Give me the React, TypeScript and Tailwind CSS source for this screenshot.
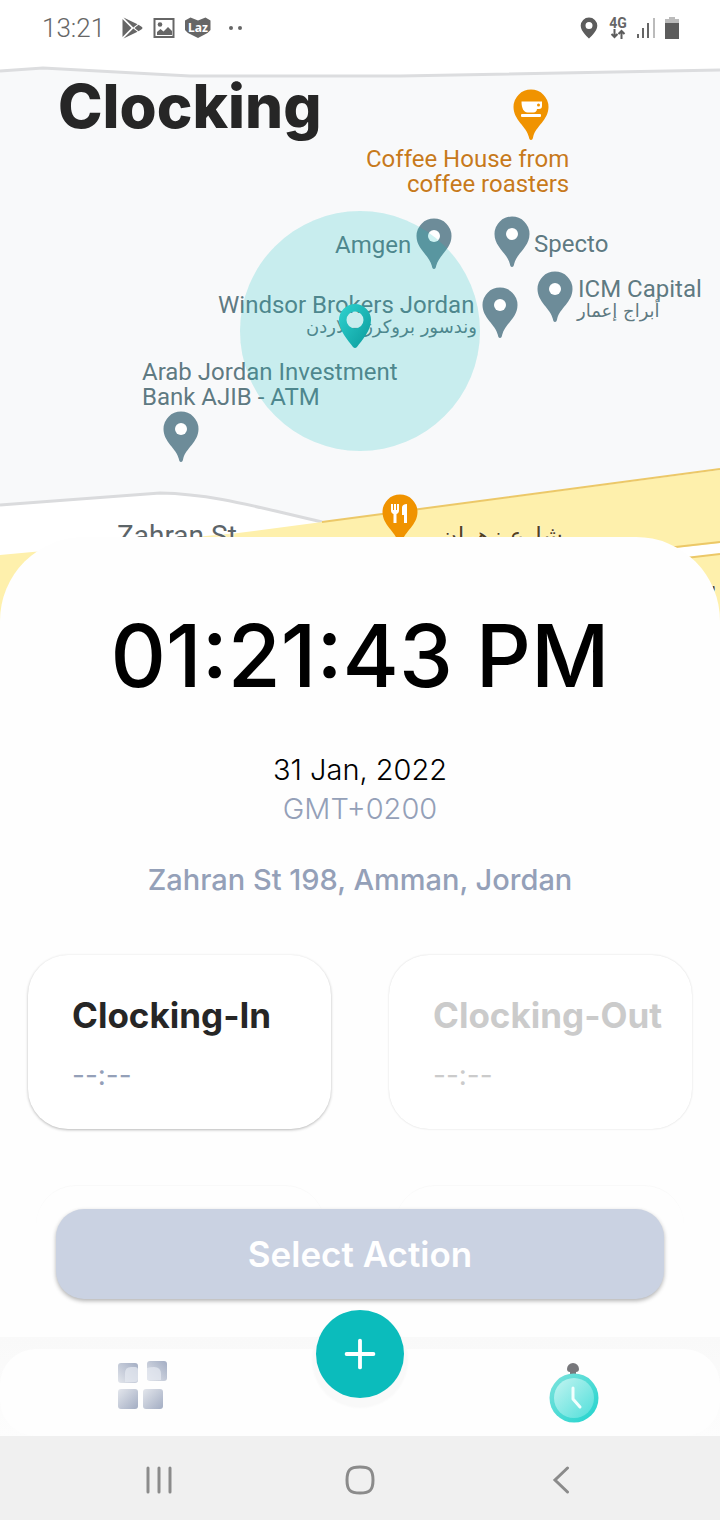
import type { ReactNode } from 'react';
import { Plus } from 'lucide-react';

// size of the drawn map tile, marker coordinates are relative to it
const MAP_WIDTH = 720;

const GREY = '#6d8c99';
const ORANGE = '#f09300';

const pins = [
    { name: 'coffee', x: 513, y: 89, color: ORANGE },
    { name: 'amgen', x: 416, y: 218, color: GREY },
    { name: 'specto', x: 494, y: 216, color: GREY },
    { name: 'icm', x: 537, y: 271, color: GREY },
    { name: 'windsor', x: 482, y: 287, color: GREY },
    { name: 'atm', x: 163, y: 411, color: GREY },
    { name: 'food', x: 382, y: 494, color: ORANGE },
];

const labels = [
    { lines: ['Coffee House from', 'coffee roasters'], x: 366, y: 147, style: 'text-2xl text-right text-[#c77a1c]' },
    { lines: ['Amgen'], x: 335, y: 233, style: 'text-2xl text-[#5f7a82]' },
    { lines: ['Specto'], x: 534, y: 232, style: 'text-2xl text-[#5f7a82]' },
    { lines: ['ICM Capital'], x: 578, y: 277, style: 'text-2xl text-[#5f7a82]' },
    { lines: ['Windsor Brokers Jordan'], x: 218, y: 293, style: 'text-2xl text-[#5f7a82]' },
    { lines: ['Arab Jordan Investment', 'Bank AJIB - ATM'], x: 142, y: 360, style: 'text-2xl text-[#5f7a82]' },
    { lines: ['Zahran St'], x: 117, y: 523, style: 'text-[28px] text-[#5c6468]' },
];

const arabicLabels = [
    { text: 'أبراج إعمار', x: 577, y: 299, style: 'text-lg text-[#5f7a82]' },
    { text: 'وندسور بروكرز - لاردن', x: 306, y: 315, style: 'text-lg text-[#5f7a82]' },
    { text: 'شارع زهران', x: 440, y: 524, style: 'text-2xl text-[#54421f]' },
    { text: 'ر', x: 707, y: 573, style: 'text-lg text-[#54421f]' },
];

function PinGlyph({ name }: { name: string }) {
    if (name === 'coffee') {
        return (
            <g fill="#fff">
                <path d="M8.5 12.5h20.500v4.500a3 3 0 0 1-3 3h-2a4 4 0 0 1-3.500 3.500h-6c-3.500 0-6-4-6-11z" />
                <rect x="8" y="25" width="20" height="3" rx="1" />
                <circle cx="25.500" cy="16" r="1.500" fill={ORANGE} />
            </g>
        );
    }
    if (name === 'food') {
        return (
            <g fill="#fff">
                <path d="M9 10h2v6h1v-6h2v6h1v-6h2v6.500c0 2-1 3-2.500 3.500v9h-3v-9C10 19.500 9 18.500 9 16.500z" />
                <path d="M20 13.500c0-2 2-3.500 5-3.500v19h-3v-8h-2z" />
            </g>
        );
    }
    return <circle cx="18" cy="18" r="6" fill="#fff" />;
}

function MapPin({ name, color }: { name: string; color: string }) {
    return (
        <svg width="36" height="52" viewBox="0 0 36 52">
            <path
                d="M18 51c-1.300 0-1.700-1-2.200-3.200C13.500 37.500.5 31 .5 18a17.500 17.500 0 0 1 35 0c0 13-13 19.500-15.300 29.800C19.700 50 19.300 51 18 51z"
                fill={color}
            />
            <PinGlyph name={name} />
        </svg>
    );
}

function StatusBar() {
    return (
        <div className="relative flex items-center justify-between h-14 pl-[42px] pr-10 text-[#666]">
            <div className="flex items-center">
                <span className="w-[78px] font-[Roboto,sans-serif] text-[26px] font-light">13:21</span>
                <svg width="24" height="22" viewBox="0 0 24 22" fill="#666">
                    <path d="M2.500 2v18l9-9z" />
                    <path d="M3.500.5l14 6.800-4.200 3.200zM3.500 21.500l14-6.800-4.200-3.200zM14.500 11l4-3.200 3.500 2.200q1 1 0 2l-3.500 2.200z" />
                </svg>
                <svg className="ml-2" width="24" height="22" viewBox="0 0 24 22" fill="none">
                    <rect x="2.500" y="2" width="19" height="18" stroke="#666" strokeWidth="2" />
                    <circle cx="8" cy="7.500" r="2.300" fill="#666" />
                    <path d="M5 18v-3l3.500-3 3 2.500 4.500-4.500 4 4v4z" fill="#666" />
                </svg>
                <div className="relative ml-2 flex h-[22px] w-7 items-center justify-center">
                    <svg className="absolute inset-0" width="28" height="22" viewBox="0 0 28 22">
                        <path d="M1 3.500L6.500.5 14 3.500 21.500.5 26.500 3.500V13l-3 3-9.500 5L4 16l-3-3z" fill="#666" />
                    </svg>
                    <span className="relative font-['Noto_Sans',sans-serif] text-xs leading-4 font-bold text-white">Laz</span>
                </div>
                <svg className="ml-4" width="16" height="6" viewBox="0 0 16 6" fill="#666">
                    <circle cx="3" cy="3" r="2" />
                    <circle cx="12" cy="3" r="2" />
                </svg>
            </div>
            <div className="flex items-center">
                <svg width="18" height="22" viewBox="0 0 18 22">
                    <path d="M9 .5a8.300 8.300 0 0 0-8.300 8.300C.7 14.500 9 21.500 9 21.500s8.300-7 8.300-12.700A8.300 8.300 0 0 0 9 .5zm0 4.500a3.500 3.500 0 1 1 0 7 3.500 3.500 0 0 1 0-7z" fill="#5c5c5c" />
                </svg>
                <div className="ml-2.5 flex w-5 flex-col items-center">
                    <span className="font-[Roboto,sans-serif] text-sm leading-3 font-bold">4G</span>
                    <svg width="16" height="10" viewBox="0 0 16 10" fill="none" stroke="#5c5c5c" strokeWidth="2">
                        <path d="M4.500 0v8M1.500 5l3 3 3-3M11.500 10V2M8.500 5l3-3 3 3" />
                    </svg>
                </div>
                <svg className="ml-2" width="20" height="22" viewBox="0 0 20 22" fill="#666">
                    <rect x="1" y="17" width="2" height="4" />
                    <rect x="6" y="11" width="2" height="10" />
                    <rect x="11" y="6" width="2" height="15" />
                    <rect x="17" y="1" width="2" height="20" fill="#bbb" />
                </svg>
                <svg className="ml-2" width="16" height="22" viewBox="0 0 16 22">
                    <path d="M5 0h6v2h4v4H1V2h4z" fill="#bbb" />
                    <rect x="1" y="6" width="14" height="16" fill="#5c5c5c" />
                </svg>
            </div>
        </div>
    );
}

function MapView() {
    return (
        <section className="relative h-[621px] overflow-hidden bg-white">
            <svg className="absolute inset-0 h-full w-full" viewBox="0 0 720 621" preserveAspectRatio="none" fill="none">
                <path d="M0 71L43 68L190 76H400L720 70V470L322 522C260 508 215 494 160 493L0 505z" fill="#f8f9fa" />
                <path d="M0 71L43 68L190 76H400L720 70" stroke="#dcdddf" strokeWidth="3" />
                <path d="M0 505L160 493C215 494 260 508 322 522" stroke="#dadbdd" strokeWidth="3" />
                <path d="M0 555L238 533L322 522L720 470V543L0 621z" fill="#fef0ac" />
                <path d="M720 554L600 566V621H720z" fill="#fef0ac" />
                <path d="M322 522L720 469M640 551L720 542M660 561L720 554" stroke="#ecc868" strokeWidth="2" />
            </svg>

            <StatusBar />
            <h1 className="relative mt-4 pl-[58px] text-[60px] leading-[68px] font-extrabold text-[#262626]">Clocking</h1>

            {/* Places */}
            {labels.map((label) => (
                <p
                    key={label.lines[0]}
                    className={`absolute font-[Roboto,sans-serif] leading-[25px] whitespace-nowrap text-shadow-[0_0_3px_white] ${label.style}`}
                    style={{ left: `${(label.x / MAP_WIDTH) * 100}%`, top: label.y }}
                >
                    {label.lines.map((line) => (
                        <span key={line} className="block">{line}</span>
                    ))}
                </p>
            ))}
            {arabicLabels.map((label) => (
                <p
                    key={label.text}
                    dir="rtl"
                    lang="ar"
                    className={`absolute font-['DejaVu_Sans',sans-serif] leading-6 whitespace-nowrap text-shadow-[0_0_2px_white] ${label.style}`}
                    style={{ left: `${(label.x / MAP_WIDTH) * 100}%`, top: label.y }}
                >
                    {label.text}
                </p>
            ))}
            {pins.map((pin) => (
                <div
                    key={pin.name}
                    className="absolute"
                    style={{ left: `${(pin.x / MAP_WIDTH) * 100}%`, top: pin.y }}
                >
                    <MapPin name={pin.name} color={pin.color} />
                </div>
            ))}

            {/* Allowed radius and current position */}
            <div className="absolute top-[211px] left-1/2 size-60 -translate-x-1/2 rounded-full bg-[#0abcbc]/20" />
            <svg className="absolute top-[303px] left-[47%]" width="34" height="46" viewBox="0 0 34 46">
                <defs>
                    <linearGradient id="here" x1="0" y1="0" x2="1" y2="1">
                        <stop offset="0" stopColor="#2fd3d0" />
                        <stop offset="1" stopColor="#0a9a9b" />
                    </linearGradient>
                </defs>
                <path
                    fillRule="evenodd"
                    d="M17 1A16 16 0 0 0 1 17c0 11 9 20 14 27q2 2 4 0c5-7 14-16 14-27A16 16 0 0 0 17 1zm0 7.500a8.500 8.500 0 1 1 0 17 8.500 8.500 0 0 1 0-17z"
                    fill="url(#here)"
                />
            </svg>
        </section>
    );
}

function ActionCard({ title, disabled = false }: { title: string; disabled?: boolean }) {
    return (
        <button
            type="button"
            disabled={disabled}
            className={`flex h-[174px] flex-col items-start rounded-[40px] bg-white pt-9 pl-11 text-left ${disabled
                ? 'text-[#cbcbcb] shadow-[0_0_2px_rgba(0,0,0,0.16)]'
                : 'text-[#262626] shadow-[0_1px_3px_rgba(0,0,0,0.28)]'
                }`}
        >
            <span className="text-[35px] leading-[48px] font-bold">{title}</span>
            <span className={`mt-3 text-[28px] leading-[48px] ${disabled ? '' : 'text-[#94a0b8]'}`}>--:--</span>
        </button>
    );
}

function GridIcon() {
    return (
        <svg width="52" height="50" viewBox="0 0 52 50">
            <defs>
                <linearGradient id="tile" x1="0" y1="0" x2="1" y2="1">
                    <stop offset="0" stopColor="#e3e6ec" />
                    <stop offset="1" stopColor="#a3adc3" />
                </linearGradient>
                <linearGradient id="tileTop" x1="0" y1="1" x2="1" y2="0">
                    <stop offset="0" stopColor="#e3e6ec" />
                    <stop offset="1" stopColor="#a3adc3" />
                </linearGradient>
            </defs>
            <rect x="1" y="3" width="20" height="20" rx="3" fill="url(#tileTop)" />
            <path d="M8 22v-9q0-6 6-6h4q3 0 3 3v9q0 3-3 3z" fill="#e4e8f0" fillOpacity="0.75" />
            <rect x="30" y="1" width="20" height="20" rx="3" fill="url(#tileTop)" />
            <path d="M30 20V8q3-1 7-1 7 0 7 7v6z" fill="#e4e8f0" fillOpacity="0.75" />
            <rect x="1" y="29" width="20" height="20" rx="3" fill="url(#tile)" />
            <rect x="26" y="29" width="20" height="20" rx="3" fill="url(#tile)" />
        </svg>
    );
}

function StopwatchIcon() {
    return (
        <svg width="50" height="62" viewBox="0 0 50 62">
            <defs>
                <linearGradient id="rim" x1="0" y1="0" x2="1" y2="1">
                    <stop offset="0" stopColor="#7fe3dd" />
                    <stop offset="1" stopColor="#1fd3cd" />
                </linearGradient>
                <linearGradient id="face" x1="0" y1="0" x2="1" y2="1">
                    <stop offset="0" stopColor="#c4f4f1" />
                    <stop offset="1" stopColor="#4fdfda" />
                </linearGradient>
            </defs>
            <path d="M18 7a6 6 0 0 1 12 0q0 3-3 3v3h-6v-3q-3 0-3-3z" fill="#77777b" />
            <circle cx="25" cy="36" r="24.500" fill="url(#rim)" />
            <circle cx="25" cy="36" r="20" fill="url(#face)" />
            <path d="M24 26v11l7 8" fill="none" stroke="#f2fffe" strokeWidth="3" strokeLinecap="round" strokeLinejoin="round" />
        </svg>
    );
}

function NavButton({ label, children }: { label: string; children: ReactNode }) {
    return (
        <button type="button" aria-label={label} className="flex size-[72px] items-center justify-center">
            {children}
        </button>
    );
}

export default function App() {
    return (
        <div className="flex min-h-screen flex-col bg-[#fefefe] font-[Inter,sans-serif]">
            <MapView />

            {/* Bottom sheet */}
            <main className="relative -mt-[84px] flex grow flex-col rounded-t-[84px] bg-[#fefefe]">
                <div className="flex flex-col items-center pt-[75px] text-center">
                    <time className="text-[86px] leading-[88px] font-medium text-black">01:21:43 PM</time>
                    <p className="mt-[50px] text-[29px] leading-[39px] font-light text-black">31 Jan, 2022</p>
                    <p className="text-[29px] leading-[39px] font-light text-[#94a0b8]">GMT+0200</p>
                    <p className="mt-8 text-[29px] leading-[39px] font-medium text-[#94a0b8]">Zahran St 198, Amman, Jordan</p>
                </div>

                <div className="mt-14 grid grid-cols-2 gap-[58px] px-7">
                    <ActionCard title="Clocking-In" />
                    <ActionCard title="Clocking-Out" disabled />
                </div>

                {/* next row of cards, scrolled under the submit button */}
                <div className="mt-14 grid h-12 grid-cols-2 gap-[70px] px-9">
                    <div className="rounded-t-[40px] border-t border-[#f9f9f9]" />
                    <div className="rounded-t-[40px] border-t border-[#f9f9f9]" />
                </div>
                <div className="relative -mt-6 px-14">
                    <button
                        type="button"
                        className="h-[90px] w-full rounded-[28px] bg-[#cad2e2] text-[35px] font-semibold text-white shadow-[0_2px_4px_rgba(0,0,0,0.3)]"
                    >
                        Select Action
                    </button>
                </div>
            </main>

            {/* App tabs */}
            <nav className="relative mt-9 bg-linear-to-b from-[#f9f9f9] to-[#fdfdfd] pt-3">
                <div className="grid h-[87px] grid-cols-[285px_1fr_293px] rounded-[36px] bg-[#fefefe]">
                    <div className="flex justify-center">
                        <NavButton label="Dashboard">
                            <GridIcon />
                        </NavButton>
                    </div>
                    <div />
                    <div className="flex items-center justify-center">
                        <NavButton label="Clocking">
                            <StopwatchIcon />
                        </NavButton>
                    </div>
                </div>
                <button
                    type="button"
                    aria-label="Add"
                    className="absolute -top-[27px] left-1/2 flex size-[88px] -translate-x-1/2 items-center justify-center rounded-full bg-[#0bbcbc] text-white shadow-[0_6px_2px_4px_#f9f9f9]"
                >
                    <Plus size={46} strokeWidth={2} />
                </button>
            </nav>

            {/* System navigation */}
            <nav className="flex h-[84px] items-center justify-around bg-[#f0f0f0] px-[58px] pt-1">
                <NavButton label="Recent apps">
                    <svg width="28" height="28" viewBox="0 0 28 28" stroke="#8b8b8b" strokeWidth="3" strokeLinecap="round">
                        <path d="M3 2v24M14 2v24M25 2v24" />
                    </svg>
                </NavButton>
                <NavButton label="Home">
                    <svg width="30" height="30" viewBox="0 0 30 30" fill="none" stroke="#8b8b8b" strokeWidth="3">
                        <path d="M15 2c10 0 13 3 13 13s-3 13-13 13S2 25 2 15 5 2 15 2z" />
                    </svg>
                </NavButton>
                <NavButton label="Back">
                    <svg width="18" height="28" viewBox="0 0 18 28" fill="none" stroke="#8b8b8b" strokeWidth="3" strokeLinecap="round">
                        <path d="M15.500 2L3 14l12.500 12" />
                    </svg>
                </NavButton>
            </nav>
        </div>
    );
}
